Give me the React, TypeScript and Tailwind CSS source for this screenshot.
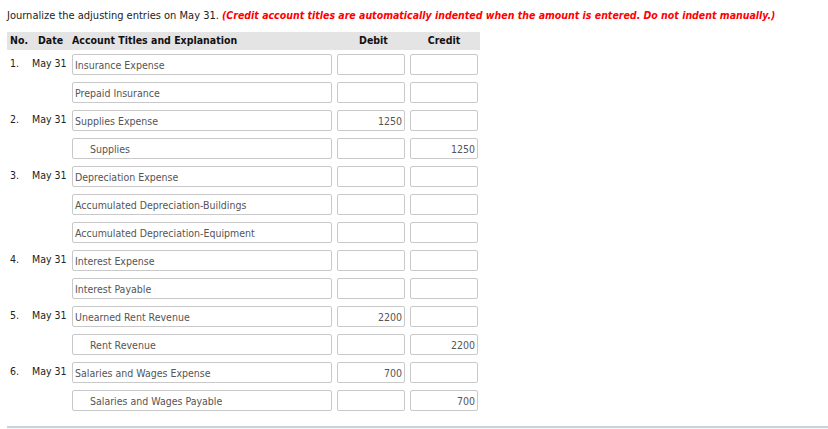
import React from 'react';

type Line = {
  no?: string;
  account: string;
  debit?: string;
  credit?: string;
  indent?: boolean;
};

const lines: Line[] = [
  { no: '1.', account: 'Insurance Expense' },
  { account: 'Prepaid Insurance' },
  { no: '2.', account: 'Supplies Expense', debit: '1250' },
  { account: 'Supplies', credit: '1250', indent: true },
  { no: '3.', account: 'Depreciation Expense' },
  { account: 'Accumulated Depreciation-Buildings' },
  { account: 'Accumulated Depreciation-Equipment' },
  { no: '4.', account: 'Interest Expense' },
  { account: 'Interest Payable' },
  { no: '5.', account: 'Unearned Rent Revenue', debit: '2200' },
  { account: 'Rent Revenue', credit: '2200', indent: true },
  { no: '6.', account: 'Salaries and Wages Expense', debit: '700' },
  { account: 'Salaries and Wages Payable', credit: '700', indent: true },
];

function Box({ value, className }: { value?: string; className: string }) {
  return (
    <div
      className={`h-[21px] flex items-center border border-[#c9c9c9] rounded-[2px] bg-white text-[10.5px] text-[#555] pt-[2px] ${className}`}
    >
      {value}
    </div>
  );
}

export default function App() {
  return (
    <div
      className="w-[828px] h-[429px] bg-white overflow-hidden text-[#222]"
      style={{ fontFamily: '"DejaVu Sans Condensed", "DejaVu Sans", sans-serif' }}
    >
      {/* Instructions */}
      <div className="pt-[9px] pl-[7px] text-[11px] leading-[13px] whitespace-nowrap">
        Journalize the adjusting entries on May 31.{' '}
        <span className="text-[#ff0000] font-bold italic text-[10.5px]">
          (Credit account titles are automatically indented when the amount is entered. Do not indent manually.)
        </span>
      </div>

      {/* Journal table */}
      <div className="ml-[7px] mt-[10px] w-[473px]">
        <div className="h-[18px] bg-[#e4e4e4] flex items-center text-[10.5px] font-bold text-[#111]">
          <span className="w-[25px] pl-[3px]">No.</span>
          <span className="w-[40px] pl-[6px]">Date</span>
          <span className="w-[265px]">Account Titles and Explanation</span>
          <span className="w-[73px] text-center">Debit</span>
          <span className="w-[68px] text-center">Credit</span>
        </div>

        <div className="pt-[4px] flex flex-col gap-[7px]">
          {lines.map((l, i) => (
            <div key={i} className="flex items-center h-[21px]">
              <span className="w-[25px] pl-[3px] text-[10.5px] pb-[2px]">{l.no}</span>
              <span className="w-[40px] text-[10.5px] pb-[2px]">{l.no ? 'May 31' : ''}</span>
              <Box
                value={l.account}
                className={`w-[260px] ${l.indent ? 'pl-[17px]' : 'pl-[2px]'}`}
              />
              <Box value={l.debit} className="w-[68px] ml-[5px] justify-end pr-[2px]" />
              <Box value={l.credit} className="w-[68px] ml-[5px] justify-end pr-[2px]" />
            </div>
          ))}
        </div>
      </div>

      {/* next panel */}
      <div className="ml-[7px] mt-[15px] h-[20px] border-t-2 border-[#c9d3e0] bg-[#f4f7fb]" />
    </div>
  );
}
